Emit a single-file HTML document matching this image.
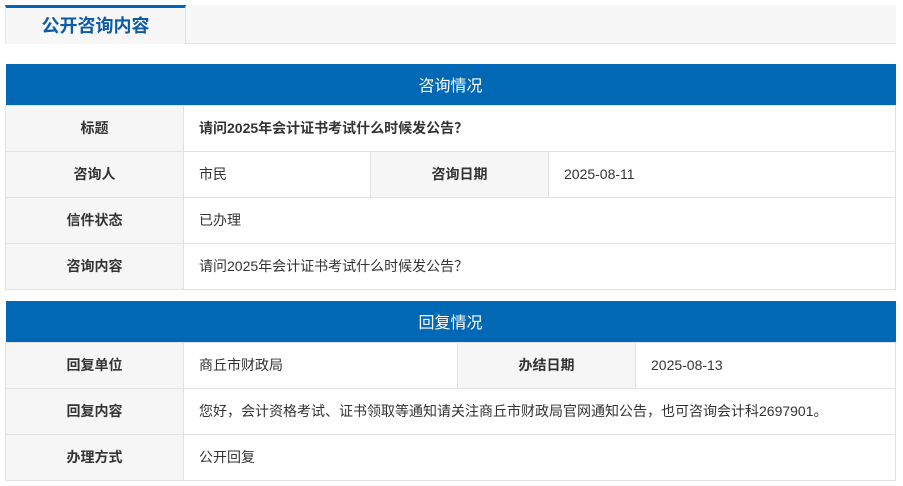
<!DOCTYPE html>
<html><head><meta charset="utf-8"><style>
*{margin:0;padding:0;box-sizing:border-box}
body{width:903px;height:486px;background:#fff;font-family:"Liberation Sans","Noto Sans CJK SC",sans-serif;color:#333;font-size:14px;position:relative;overflow:hidden}
.bar{position:absolute;left:5px;top:5px;width:891px;height:39px;background:#f7f7f7;border-bottom:1px solid #e2e2e2}
.tab{position:absolute;left:5px;top:5px;width:181px;height:39px;background:#f7f7f7;border-top:3px solid #0068b5;border-right:1px solid #e0e0e0;border-left:1px solid #e8e8e8;color:#0a5ba8;font-weight:bold;font-size:18px;text-align:center;line-height:36px}
table{position:absolute;left:5px;width:891px;border-collapse:collapse;table-layout:fixed}
td{border:1px solid #e2e2e2;height:46px;padding:0 15px}
th{background:#0068b5;color:#fff;font-weight:normal;font-size:16px;height:41px;padding:0;border:0}
.l{background:#f6f6f6;font-weight:bold;text-align:center}
</style></head><body>
<div class="bar"></div>
<div class="tab">公开咨询内容</div>
<table style="top:64px">
<colgroup><col style="width:178px"><col style="width:187px"><col style="width:178px"><col></colgroup>
<tr><th colspan="4">咨询情况</th></tr>
<tr><td class="l">标题</td><td colspan="3" style="font-weight:bold">请问2025年会计证书考试什么时候发公告？</td></tr>
<tr><td class="l">咨询人</td><td>市民</td><td class="l">咨询日期</td><td>2025-08-11</td></tr>
<tr><td class="l">信件状态</td><td colspan="3">已办理</td></tr>
<tr><td class="l">咨询内容</td><td colspan="3">请问2025年会计证书考试什么时候发公告？</td></tr>
</table>
<table style="top:301px">
<colgroup><col style="width:178px"><col style="width:274px"><col style="width:178px"><col></colgroup>
<tr><th colspan="4">回复情况</th></tr>
<tr><td class="l">回复单位</td><td>商丘市财政局</td><td class="l">办结日期</td><td>2025-08-13</td></tr>
<tr><td class="l">回复内容</td><td colspan="3">您好，会计资格考试、证书领取等通知请关注商丘市财政局官网通知公告，也可咨询会计科2697901。</td></tr>
<tr><td class="l">办理方式</td><td colspan="3">公开回复</td></tr>
</table>
</body></html>
